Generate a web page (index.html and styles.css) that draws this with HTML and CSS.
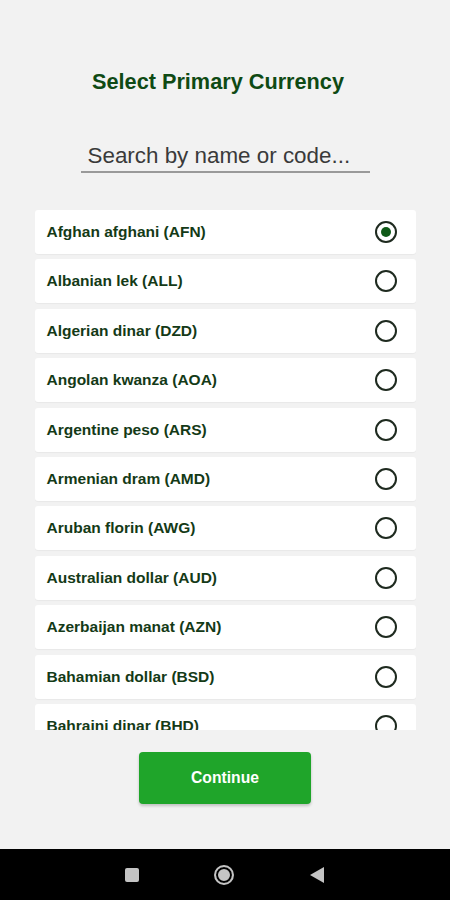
FILE: index.html
```html
<!DOCTYPE html>
<html lang="en">
<head>
  <meta charset="UTF-8">
  <meta name="viewport" content="width=device-width, initial-scale=1.0">
  <title>Select Primary Currency</title>
  <link rel="stylesheet" href="styles.css">
</head>
<body>

  <div class="screen">
    <h1 class="title">Select Primary Currency</h1>

    <div class="search">
      <input type="text" class="search-input" placeholder="Search by name or code...">
    </div>

    <div class="currency-list">
      <label class="currency-item">
        <span class="currency-name">Afghan afghani (AFN)</span>
        <span class="radio checked"></span>
      </label>
      <label class="currency-item">
        <span class="currency-name">Albanian lek (ALL)</span>
        <span class="radio"></span>
      </label>
      <label class="currency-item">
        <span class="currency-name">Algerian dinar (DZD)</span>
        <span class="radio"></span>
      </label>
      <label class="currency-item">
        <span class="currency-name">Angolan kwanza (AOA)</span>
        <span class="radio"></span>
      </label>
      <label class="currency-item">
        <span class="currency-name">Argentine peso (ARS)</span>
        <span class="radio"></span>
      </label>
      <label class="currency-item">
        <span class="currency-name">Armenian dram (AMD)</span>
        <span class="radio"></span>
      </label>
      <label class="currency-item">
        <span class="currency-name">Aruban florin (AWG)</span>
        <span class="radio"></span>
      </label>
      <label class="currency-item">
        <span class="currency-name">Australian dollar (AUD)</span>
        <span class="radio"></span>
      </label>
      <label class="currency-item">
        <span class="currency-name">Azerbaijan manat (AZN)</span>
        <span class="radio"></span>
      </label>
      <label class="currency-item">
        <span class="currency-name">Bahamian dollar (BSD)</span>
        <span class="radio"></span>
      </label>
      <label class="currency-item">
        <span class="currency-name">Bahraini dinar (BHD)</span>
        <span class="radio"></span>
      </label>
    </div>

    <div class="actions">
      <button type="button" class="continue-btn">Continue</button>
    </div>
  </div>

  <nav class="nav-bar">
    <span class="nav-recent"></span>
    <span class="nav-home"></span>
    <svg class="nav-back" width="16" height="18" viewBox="0 0 16 18">
      <polygon points="15,1 15,17 1,9" fill="#c4c4c4"/>
    </svg>
  </nav>

</body>
</html>
```

FILE: styles.css
```css
body {
  margin: 0;
  font-family: "Liberation Sans", Arial, sans-serif;
  background-color: #f2f2f2;
  color: #222;
}

.screen {
  height: 849px;
  display: flex;
  flex-direction: column;
  align-items: center;
}

.title {
  margin: 69px 14px 0 0;
  font-size: 21.7px;
  line-height: 26px;
  font-weight: 700;
  color: #0f4a14;
}

.search {
  margin-top: 47px;
  width: 289px;
  border-bottom: 2px solid #9a9a9a;
}

.search-input {
  display: block;
  width: 100%;
  height: 29px;
  box-sizing: border-box;
  border: none;
  background: transparent;
  padding: 0 0 1px 7px;
  font-family: "Liberation Sans", Arial, sans-serif;
  font-size: 22.4px;
  line-height: 28px;
  color: #333;
  outline: none;
}

.search-input::placeholder {
  color: #3a3a3a;
}

.currency-list {
  margin-top: 37px;
  width: 381px;
  height: 520px;
  overflow: hidden;
  display: flex;
  flex-direction: column;
  gap: 5.4px;
}

.currency-item {
  flex: none;
  height: 44px;
  display: flex;
  align-items: center;
  justify-content: space-between;
  padding: 0 19px 0 12px;
  background-color: #fff;
  border-radius: 3px;
  box-shadow: 0 1px 1px rgba(0, 0, 0, 0.04);
}

.currency-name {
  font-size: 15.5px;
  font-weight: 700;
  color: #143a17;
}

.radio {
  width: 18px;
  height: 18px;
  border: 2px solid #1e2a1f;
  border-radius: 50%;
  display: flex;
  align-items: center;
  justify-content: center;
}

.radio.checked::after {
  content: "";
  width: 10px;
  height: 10px;
  border-radius: 50%;
  background-color: #0f5a18;
}

.actions {
  margin-top: 22px;
}

.continue-btn {
  width: 172px;
  height: 52px;
  background-color: #1fa52a;
  color: #fff;
  border: none;
  border-radius: 4px;
  font-family: "Liberation Sans", Arial, sans-serif;
  font-size: 15.7px;
  font-weight: 700;
  box-shadow: 0 2px 3px rgba(0, 0, 0, 0.2);
  cursor: pointer;
}

.nav-bar {
  height: 51px;
  background-color: #000;
  display: flex;
  align-items: center;
  justify-content: center;
  gap: 75px;
}

.nav-recent {
  width: 14px;
  height: 14px;
  background-color: #c4c4c4;
  border-radius: 2px;
}

.nav-home {
  width: 16px;
  height: 16px;
  border: 2px solid #c4c4c4;
  border-radius: 50%;
  box-shadow: inset 0 0 0 2px #000, inset 0 0 0 9px #c4c4c4;
}

.nav-back {
  display: block;
}
```
